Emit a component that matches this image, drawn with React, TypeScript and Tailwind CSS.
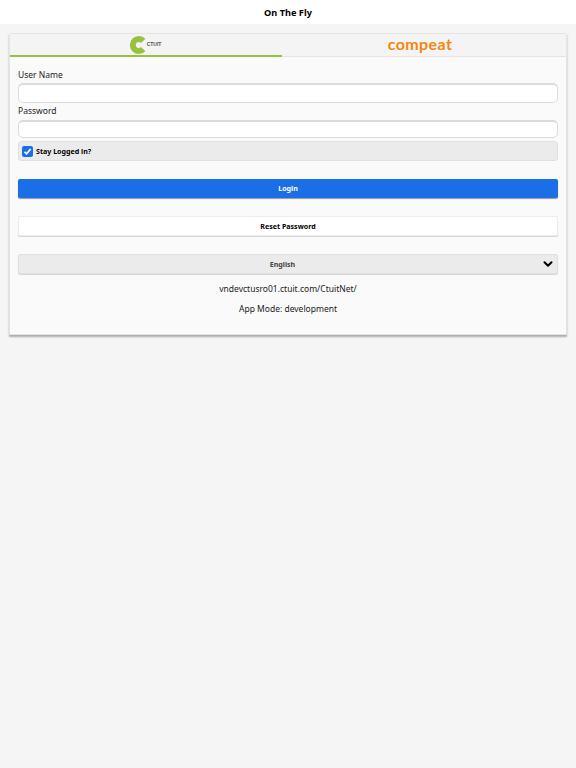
import { ChevronDown } from 'lucide-react'

const font = "[font-family:'Noto_Sans',sans-serif]"

function CtuitLogo() {
    return (
        <div className="flex items-center mr-[2px]">
            <svg width="18" height="18" viewBox="0 0 18 18">
                <path d="M14.2 4.9A6 6 0 1 0 14.2 13.1" fill="none" stroke="#96c240" strokeWidth="6" />
            </svg>
            <span className="text-[5px] font-bold text-[#555] [font-family:'Liberation_Sans',sans-serif]">CTUIT</span>
        </div>
    )
}

export default function App() {
    return (
        <div className={`min-h-[768px] bg-[#f5f5f5] text-[#222] ${font}`}>
            <div className="h-6 bg-white flex items-center justify-center pt-[1px] text-[9.2px] font-bold text-black">On The Fly</div>
            <div className="pt-[9px] px-[9px]">
                <div className="bg-[#fafafa] border border-[#e4e4e4] rounded-t-[2px] shadow-[0_2px_2px_rgba(0,0,0,0.3)] h-[302px]">
                    <div className="flex h-[23px] bg-[#f4f4f4]">
                        <div className="w-[272px] flex items-center justify-center border-b-2 border-[#96c240]">
                            <CtuitLogo />
                        </div>
                        <div className="grow flex items-center justify-center border-b border-[#e4e4e4] pr-[8px]">
                            <span className="text-[#f5860f] text-[16px] font-bold tracking-[0.4px] leading-none mt-[-2px] [font-family:'Lato',sans-serif]">compeat</span>
                        </div>
                    </div>
                    <div className="px-2">
                        <div className="text-[8.5px] leading-4 mt-[10px]">User Name</div>
                        <input className="block w-full h-[20px] bg-white border border-[#dcdcdc] border-t-2 rounded-[5px]" />
                        <div className="text-[8.5px] leading-4">Password</div>
                        <input className="block w-full h-[18px] mt-[1px] bg-white border border-[#dcdcdc] border-t-2 rounded-[5px]" />
                        <div className="flex items-center h-[20px] mt-[3px] bg-[#ebebeb] border border-[#e0e0e0] rounded-[3px] pl-[3px]">
                            <div className="w-[11px] h-[11px] rounded-[2px] bg-[#1a6fe6] flex items-center justify-center">
                                <svg width="9" height="9" viewBox="0 0 9 9">
                                    <path d="M1.5 4.8L3.6 6.8L7.6 2" fill="none" stroke="#fff" strokeWidth="1.8" />
                                </svg>
                            </div>
                            <span className="text-[7.1px] font-bold ml-[3px] text-black">Stay Logged in?</span>
                        </div>
                        <button className="block w-full h-[19px] mt-[18px] bg-[#1a6fe6] rounded-[2px] text-white text-[7.1px] font-bold shadow-[0_1px_1px_rgba(0,0,0,0.4)]">Login</button>
                        <button className="block w-full h-[20px] mt-[18px] bg-white border border-[#ececec] rounded-[2px] text-black text-[7.1px] font-bold shadow-[0_1px_1px_rgba(0,0,0,0.15)]">Reset Password</button>
                        <div className="relative flex items-center justify-center h-[20px] mt-[18px] bg-[#ebebeb] border border-[#e0e0e0] rounded-[2px] text-[7.1px] font-bold text-[#444] pr-[11px] shadow-[0_1px_1px_rgba(0,0,0,0.15)]">
                            English
                            <ChevronDown className="absolute right-[2px] top-[2px] text-black" size={14} strokeWidth={3.5} />
                        </div>
                        <div className="text-[8.5px] text-center leading-4 mt-[7px]">vndevctusro01.ctuit.com/CtuitNet/</div>
                        <div className="text-[8.5px] text-center leading-4 mt-1">App Mode: development</div>
                    </div>
                </div>
            </div>
        </div>
    )
}
